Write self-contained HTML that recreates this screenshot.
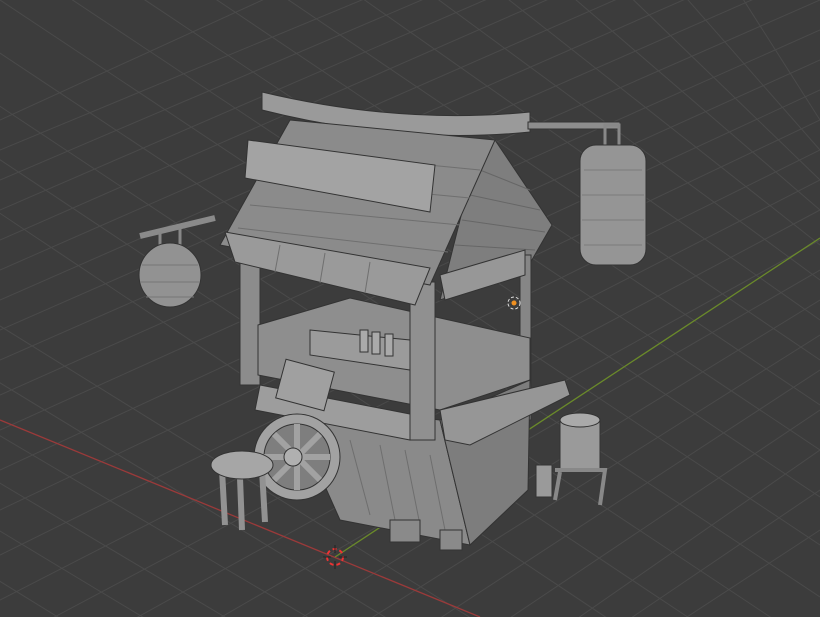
<!DOCTYPE html>
<html><head><style>
html,body{margin:0;padding:0;background:#3b3b3b;width:820px;height:617px;overflow:hidden}
svg{display:block;position:absolute;top:0;left:0}
</style></head><body>
<svg width="820" height="617" viewBox="0 0 820 617" xmlns="http://www.w3.org/2000/svg">
<rect width="820" height="617" fill="#3c3c3c"/>
<g stroke="#4a4a4a" stroke-width="1" fill="none">
<path d="M-200 80 L820 760 M-150 60 L820 705 M-100 40 L820 650 M-50 20 L820 597 M0 0 L820 545 M50 -15 L820 497 M100 -30 L820 450 M150 -45 L820 405 M200 -60 L820 360 M265 -70 L820 320 M330 -80 L820 280 M395 -90 L820 245 M460 -100 L820 210 M530 -100 L820 180 M600 -100 L820 150 M680 -100 L820 120 M-300 140 L700 760 M-350 170 L620 760 M-400 200 L550 760 M-400 245 L465 760 M-400 290 L380 760 M-400 335 L290 760 M-400 380 L200 760"/>
<path d="M0 300 L820 -60 M0 330 L820 -30 M0 360 L820 0 M0 395 L820 30 M0 430 L820 60 M0 470 L820 90 M0 510 L820 120 M0 555 L820 150 M0 600 L820 180 M30 630 L820 210 M60 660 L820 240 M130 670 L820 270 M200 680 L820 300 M265 685 L820 335 M330 690 L820 370 M395 695 L820 410 M460 700 L820 450 M510 700 L820 490 M560 700 L820 530 M0 270 L820 -90 M0 240 L820 -120 M0 210 L820 -145 M0 180 L820 -170 M0 150 L820 -190 M0 120 L700 -200"/>
</g>
<line x1="0" y1="420" x2="480" y2="617" stroke="#9a3a3a" stroke-width="1.3"/>
<line x1="820" y1="238" x2="335" y2="557" stroke="#6a8a2a" stroke-width="1.3"/>
<g stroke="#333" stroke-width="1">
<path d="M262 92 Q400 125 530 112 L530 132 Q400 145 262 110 Z" fill="#9a9a9a"/>
<rect x="528" y="122" width="92" height="7" fill="#8d8d8d"/>
<rect x="605" y="125" width="14" height="25" fill="none" stroke="#888" stroke-width="3"/>
<rect x="580" y="145" width="66" height="120" rx="16" fill="#959595"/>
<path d="M584 170 H642 M582 195 H644 M582 220 H644 M584 245 H642" stroke="#7a7a7a"/>
<path d="M140 236 L215 218" stroke="#8a8a8a" stroke-width="6"/>
<path d="M160 232 V252 M180 228 V250" stroke="#888" stroke-width="3"/>
<ellipse cx="170" cy="275" rx="31" ry="32" fill="#929292"/>
<path d="M142 265 H198 M140 282 H200 M146 297 H194" stroke="#777"/>
<path d="M495 140 L552 225 L525 272 L440 300 L470 180 Z" fill="#7e7e7e"/>
<path d="M480 170 L530 190 M470 195 L540 210 M462 220 L545 232 M455 245 L535 250" stroke="#666"/>
<rect x="240" y="245" width="20" height="140" fill="#8c8c8c"/>
<rect x="520" y="255" width="11" height="165" fill="#868686"/>
<path d="M258 325 L350 298 L530 338 L530 380 L440 410 L258 375 Z" fill="#8e8e8e"/>
<path d="M265 400 L440 420 L470 545 L340 520 L300 430 Z" fill="#8a8a8a"/>
<path d="M440 420 L530 380 L528 490 L470 545 Z" fill="#7d7d7d"/>
<path d="M350 440 L370 515 M380 445 L395 520 M405 450 L420 525 M430 455 L445 530" stroke="#6e6e6e"/>
<path d="M260 385 L415 415 L410 440 L255 410 Z" fill="#9d9d9d"/>
<path d="M440 410 L565 380 L570 395 L470 445 L445 440 Z" fill="#969696"/>
<rect x="280" y="365" width="50" height="40" fill="#a0a0a0" transform="rotate(15 305 385)"/>
<path d="M310 330 L410 340 L410 370 L310 355 Z" fill="#9b9b9b"/>
<rect x="360" y="330" width="8" height="22" fill="#aaa"/><rect x="372" y="332" width="8" height="22" fill="#aaa"/><rect x="385" y="334" width="8" height="22" fill="#aaa"/>
<rect x="410" y="282" width="25" height="158" fill="#909090"/>
<path d="M290 120 L495 140 L430 285 L220 245 Z" fill="#8b8b8b"/>
<path d="M275 150 L480 170 M262 178 L470 198 M250 205 L460 225 M238 228 L448 252" stroke="#6f6f6f"/>
<path d="M225 232 L430 268 L415 305 L235 262 Z" fill="#9a9a9a"/>
<path d="M280 245 L275 272 M325 253 L320 283 M370 262 L365 293" stroke="#6f6f6f"/>
<path d="M248 140 L435 165 L430 212 L245 178 Z" fill="#a3a3a3"/>
<path d="M440 275 L525 250 L525 275 L445 300 Z" fill="#979797"/>
<circle cx="297" cy="457" r="43" fill="#a2a2a2"/>
<circle cx="297" cy="457" r="33" fill="#7e7e7e"/>
<path d="M297 424 V490 M264 457 H330 M274 434 L320 480 M320 434 L274 480" stroke="#a2a2a2" stroke-width="6"/>
<circle cx="293" cy="457" r="9" fill="#b0b0b0"/>
<path d="M222 470 L225 525 M262 470 L265 522 M240 478 L242 530" stroke="#929292" stroke-width="6"/>
<ellipse cx="242" cy="465" rx="31" ry="14" fill="#a6a6a6"/>
<path d="M560 420 L600 420 L600 470 L560 470 Z" fill="#9a9a9a"/>
<ellipse cx="580" cy="420" rx="20" ry="7" fill="#aaa"/>
<path d="M555 470 L605 470 L600 505 M560 472 L555 500" stroke="#888" stroke-width="4" fill="none"/>
<rect x="536" y="465" width="16" height="32" fill="#9a9a9a"/>
<rect x="390" y="520" width="30" height="22" fill="#8a8a8a"/>
<rect x="440" y="530" width="22" height="20" fill="#8a8a8a"/>
</g>
<circle cx="514" cy="303" r="6" fill="none" stroke="#ddd" stroke-dasharray="3 2"/>
<circle cx="514" cy="303" r="2.5" fill="#f09020"/>
<circle cx="335" cy="557" r="8" fill="none" stroke="#e33" stroke-width="2" stroke-dasharray="4 3"/>
<path d="M335 545 V553 M335 561 V569 M323 557 H331 M339 557 H347" stroke="#222" stroke-width="1"/>
</svg>
</body></html>
